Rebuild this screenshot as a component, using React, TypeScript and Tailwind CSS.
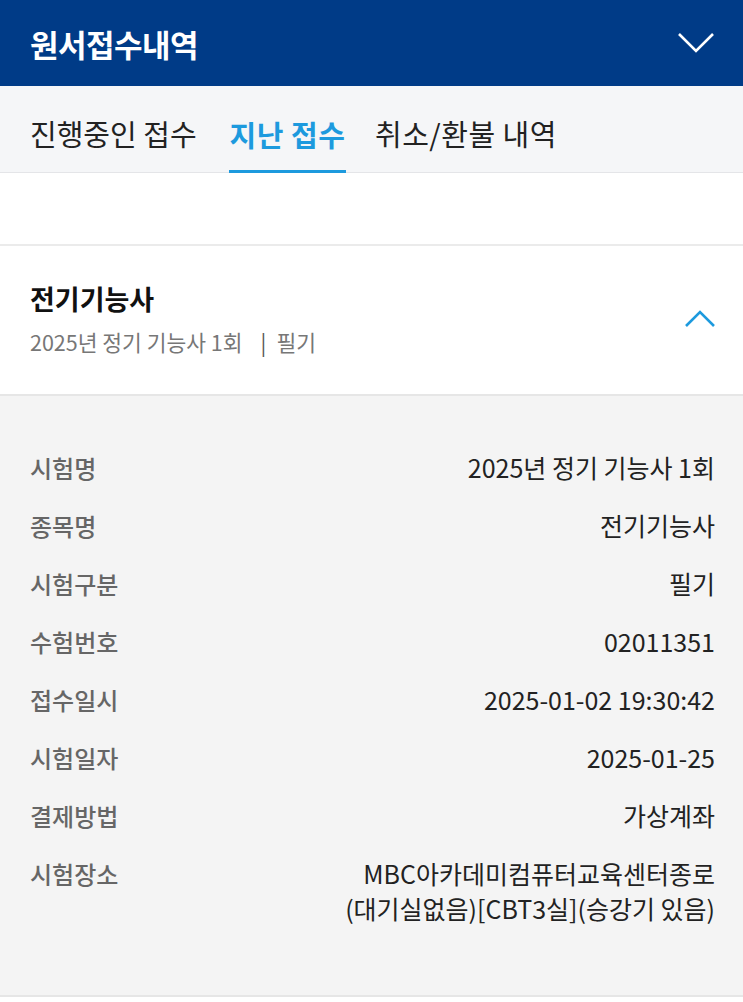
import React from "react";

const rows: [string, string[]][] = [
  ["시험명", ["2025년 정기 기능사 1회"]],
  ["종목명", ["전기기능사"]],
  ["시험구분", ["필기"]],
  ["수험번호", ["02011351"]],
  ["접수일시", ["2025-01-02 19:30:42"]],
  ["시험일자", ["2025-01-25"]],
  ["결제방법", ["가상계좌"]],
  ["시험장소", ["MBC아카데미컴퓨터교육센터종로", "(대기실없음)[CBT3실](승강기 있음)"]],
];

export default function App() {
  return (
    <div
      className="w-[743px] h-[1002px] bg-white overflow-hidden"
      style={{ fontFamily: '"Noto Sans CJK KR", "Noto Sans", sans-serif' }}
    >
      <div className="h-[86px] bg-[#003b87] flex items-center justify-between pl-[30px] pr-[28px]">
        <div className="text-white text-[31px] font-bold tracking-[-0.5px] leading-none">원서접수내역</div>
        <svg width="38" height="22" viewBox="0 0 38 22" fill="none">
          <path d="M2 2 L19 19 L36 2" stroke="white" strokeWidth="2.6" />
        </svg>
      </div>
      <div className="h-[87px] bg-[#f5f6f8] border-b border-[#e4e5e8] flex items-stretch pl-[30px] gap-[29px]">
        <div className="flex items-center text-[29px] text-[#222] pt-[10px] w-[170px]">진행중인 접수</div>
        <div className="flex items-center justify-center text-[29px] text-[#1d9ade] font-bold border-b-[3px] border-[#1d9ade] pt-[13px] -mb-px w-[117px] tracking-[0.5px]">지난 접수</div>
        <div className="flex items-center text-[29px] text-[#222] pt-[10px] tracking-[0.5px]">취소/환불 내역</div>
      </div>
      <div className="h-[73px] bg-white border-b-2 border-[#ebebeb]" />
      <div className="h-[150px] bg-white border-b-2 border-[#e6e6e6] flex items-center justify-between pl-[30px] pr-[27px]">
        <div className="flex flex-col mt-[-3px]">
          <div className="text-[27px] font-bold text-[#111] leading-[34px]">전기기능사</div>
          <div className="text-[21.5px] text-[#777] leading-[26px] mt-[13px] flex items-center">
            <span>2025년 정기 기능사 1회</span>
            <span className="ml-[18px] mr-[10px] text-[#555]">|</span>
            <span>필기</span>
          </div>
        </div>
        <svg width="32" height="20" viewBox="0 0 32 20" fill="none" className="mt-[-2px]">
          <path d="M2 17 L16 3 L30 17" stroke="#1d9ade" strokeWidth="2.6" />
        </svg>
      </div>
      <div className="bg-[#f4f4f4] border-b-2 border-[#e6e6e6] pl-[30px] pr-[28px] pt-[54px] pb-[69px]">
        {rows.map(([label, vals]) => (
          <div key={label} className="flex justify-between items-start min-h-[58px]">
            <div className="text-[24px] font-medium text-[#666] leading-[35px]">{label}</div>
            <div className="text-[25px] text-[#222] leading-[35px] text-right">
              {vals.map((v) => (
                <div key={v}>{v}</div>
              ))}
            </div>
          </div>
        ))}
      </div>
    </div>
  );
}
